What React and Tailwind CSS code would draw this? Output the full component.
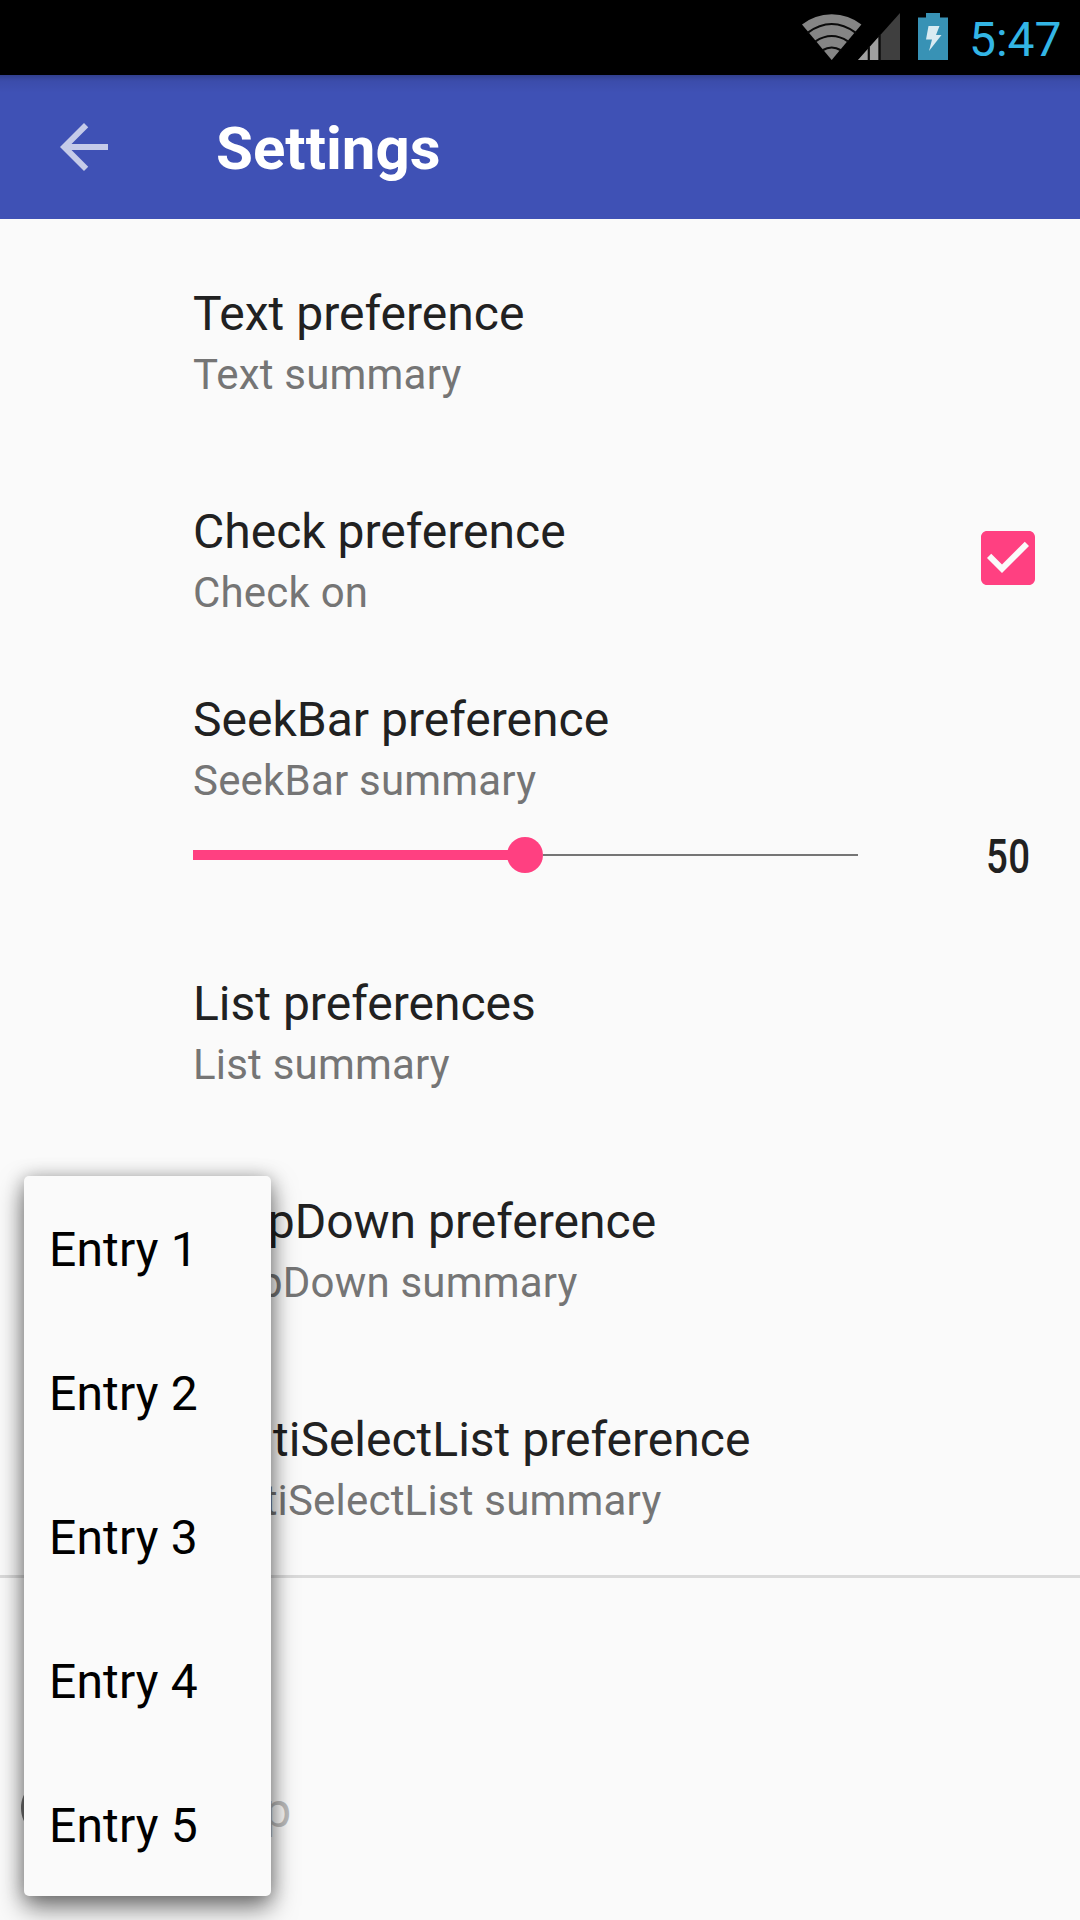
function StatusBar() {
  return (
    <div className="flex h-[75px] items-start bg-black pl-[802px]">
      <svg className="mt-[13px] h-12 w-[60px] shrink-0" viewBox="0 0 60 48">
        <path d="M29.7 47L0 11.5Q12.5 1.5 29.7 1.2Q46.9 1.5 59.4 11.5Z" fill="#858585" />
        <g fill="none" stroke="#0a0a0a" strokeWidth="2.2">
          <path d="M5.5 19.8Q29.7 2.2 53.9 19.8" />
          <path d="M13.5 28.3Q29.7 17.7 45.9 28.3" />
          <path d="M20.5 37.3Q29.7 31.7 38.9 37.3" />
        </g>
      </svg>
      <svg className="-ml-1 mt-[13px] h-12 w-[42px] shrink-0" viewBox="0 0 42 48">
        <path d="M42 0V47H0Z" fill="#3f3f3f" />
        <path d="M0 47L20.5 24V47Z" fill="#a0a0a0" />
        <path d="M10.8 34V47.5M21.6 22V47.5" stroke="#0a0a0a" strokeWidth="2.2" />
      </svg>
      <svg className="ml-[18px] mt-[13px] h-12 w-[30px] shrink-0" viewBox="0 0 30 48">
        <path d="M8 0H22V4.5H30V47H0V4.5H8Z" fill="#3892b5" />
        <path d="M10.5 13H21.5L18 22H23.5L11 38L14 26.5H8Z" fill="#d9ebf2" />
      </svg>
      <span className="ml-[21px] mt-3 text-[48px] leading-[56px] text-[#33b5e5]">5:47</span>
    </div>
  );
}

function Toolbar() {
  return (
    <header className="flex h-36 items-center bg-[#3f51b5] bg-[linear-gradient(to_bottom,rgba(0,0,0,0.22),rgba(0,0,0,0.06)_6px,transparent_18px)] pl-12">
      <svg className="h-[72px] w-[72px]" viewBox="0 0 24 24" fill="#fff" fillOpacity="0.7">
        <path d="M20 11H7.83l5.59-5.59L12 4l-8 8 8 8 1.41-1.41L7.83 13H20v-2z" />
      </svg>
      <h1 className="ml-24 mt-[3px] text-[60px] font-bold leading-[70px] text-white">Settings</h1>
    </header>
  );
}

function Labels({ title, summary }) {
  return (
    <div className="flex flex-col gap-2 whitespace-nowrap">
      <span className="text-[48px] leading-[56px] text-[#212121]">{title}</span>
      <span className="text-[42px] leading-[49px] tracking-[0.2px] text-[#757575]">{summary}</span>
    </div>
  );
}

function Row({ title, summary, children }) {
  return (
    <div className="flex h-[218px] justify-between pl-[193px] pr-9 pt-[55px]">
      <Labels title={title} summary={summary} />
      {children}
    </div>
  );
}

function SeekBarRow() {
  return (
    <div className="h-[254px] pl-[193px] pr-[49px] pt-[25px]">
      <Labels title="SeekBar preference" summary="SeekBar summary" />
      <div className="mt-[22px] flex h-[56px] items-center justify-between">
        <div className="flex w-[665px] items-center">
          <div className="h-[10px] w-[315px] bg-[#ff4081]" />
          <div className="-ml-px h-9 w-9 rounded-full bg-[#ff4081]" />
          <div className="h-0.5 flex-1 bg-[#757575]" />
        </div>
        <span className="mt-1 origin-right scale-x-[0.8] text-[48px] font-medium leading-[56px] tracking-[0.5px] text-[#212121]">50</span>
      </div>
    </div>
  );
}

function DropDownMenu({ entries }) {
  return (
    <ul className="absolute left-6 top-[1176px] h-[720px] w-[247px] rounded-[5px] bg-[#fafafa] shadow-[0_12px_26px_rgba(0,0,0,0.5),0_1px_18px_rgba(0,0,0,0.25)]">
      {entries.map((entry) => (
        <li key={entry} className="flex h-36 items-center whitespace-pre pl-[25px] pt-1 text-[48px] leading-[56px] tracking-[0.15px] text-black">
          {entry}
        </li>
      ))}
    </ul>
  );
}

export default function App() {
  return (
    <div className="relative h-[1920px] w-[1080px] overflow-hidden bg-[#fafafa] [font-family:Roboto,'Liberation_Sans',sans-serif]">
      <StatusBar />
      <Toolbar />
      <main className="pt-3">
        <Row title="Text preference" summary="Text summary" />
        <Row title="Check preference" summary="Check on">
          <svg className="mt-[18px] h-[72px] w-[72px]" viewBox="0 0 24 24" fill="#ff4081">
            <path d="M19 3H5c-1.11 0-2 .9-2 2v14c0 1.1.89 2 2 2h14c1.11 0 2-.9 2-2V5c0-1.1-.89-2-2-2zm-9 14l-5-5 1.41-1.41L10 14.17l7.59-7.59L19 8l-9 9z" />
          </svg>
        </Row>
        <SeekBarRow />
        <Row title="List preferences" summary="List summary" />
        <Row title="DropDown preference" summary="DropDown summary" />
        <Row title="MultiSelectList preference" summary="MultiSelectList summary" />
        <div className="h-[3px] bg-[#dadada]" />
        <div className="flex items-center pl-[15px] pt-[194px]">
          <svg className="h-[72px] w-[72px]" viewBox="0 0 24 24" fill="#757575">
            <path d="M11 18h2v-2h-2v2zm1-16C6.48 2 2 6.48 2 12s4.48 10 10 10 10-4.48 10-10S17.52 2 12 2zm0 18c-4.41 0-8-3.59-8-8s3.59-8 8-8 8 3.59 8 8-3.59 8-8 8zm0-14c-2.21 0-4 1.79-4 4h2c0-1.1.9-2 2-2s2 .9 2 2c0 2-3 1.75-3 5h2c0-2.25 3-2.5 3-5 0-2.21-1.79-4-4-4z" />
          </svg>
          <span className="ml-[106px] mt-1.5 text-[48px] leading-[56px] text-[#bdbdbd]">Help</span>
        </div>
      </main>
      <DropDownMenu entries={["Entry 1", "Entry 2", "Entry 3", "Entry 4", "Entry 5"]} />
    </div>
  );
}
